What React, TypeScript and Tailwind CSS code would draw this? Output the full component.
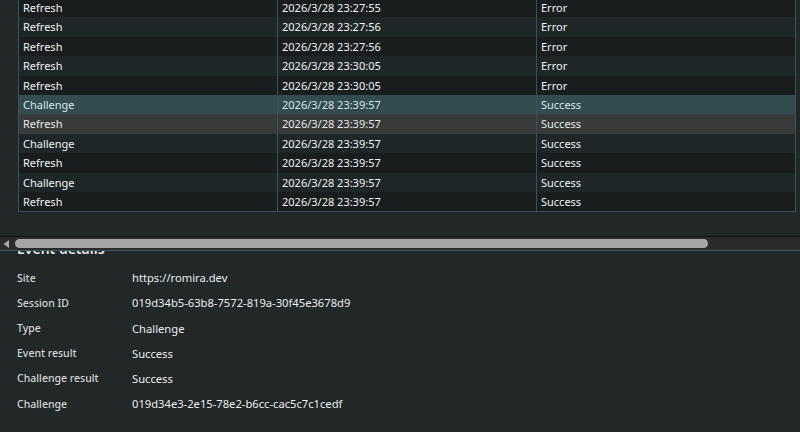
import React from "react";

type Row = { type: string; time: string; result: string };

const rows: Row[] = [
  { type: "Refresh", time: "2026/3/28 23:27:55", result: "Error" },
  { type: "Refresh", time: "2026/3/28 23:27:56", result: "Error" },
  { type: "Refresh", time: "2026/3/28 23:27:56", result: "Error" },
  { type: "Refresh", time: "2026/3/28 23:30:05", result: "Error" },
  { type: "Refresh", time: "2026/3/28 23:30:05", result: "Error" },
  { type: "Challenge", time: "2026/3/28 23:39:57", result: "Success" },
  { type: "Refresh", time: "2026/3/28 23:39:57", result: "Success" },
  { type: "Challenge", time: "2026/3/28 23:39:57", result: "Success" },
  { type: "Refresh", time: "2026/3/28 23:39:57", result: "Success" },
  { type: "Challenge", time: "2026/3/28 23:39:57", result: "Success" },
  { type: "Refresh", time: "2026/3/28 23:39:57", result: "Success" },
];

const details: [string, string][] = [
  ["Site", "https://romira.dev"],
  ["Session ID", "019d34b5-63b8-7572-819a-30f45e3678d9"],
  ["Type", "Challenge"],
  ["Event result", "Success"],
  ["Challenge result", "Success"],
  ["Challenge", "019d34e3-2e15-78e2-b6cc-cac5c7c1cedf"],
];

function rowClass(i: number) {
  if (i === 5) return "bg-[#344b50] text-[#d3e6ea]";
  if (i === 6) return "bg-[#393b3b] text-[#e4e8e8]";
  return i % 2 === 1 ? "bg-[#1f2628] text-[#f0f2f2]" : "bg-[#191d1e] text-[#f0f2f2]";
}

export default function App() {
  return (
    <div
      className="w-[800px] h-[432px] overflow-hidden bg-[#222727] flex flex-col"
      style={{ fontFamily: '"Noto Sans", "Open Sans", sans-serif' }}
    >
      <div className="h-[236px] overflow-hidden px-[18px] pr-[4px] shrink-0">
        <div className="mt-[-2px] border border-[#3d5158] border-t-0">
          {rows.map((r, i) => (
            <div key={i} className={`grid grid-cols-[259px_259px_1fr] h-[19.4px] text-[11px] leading-[19px] ${rowClass(i)}`}>
              <div className="pl-[4px] border-r border-[#3d5158]">{r.type}</div>
              <div className="pl-[4px] border-r border-[#3d5158]">{r.time}</div>
              <div className="pl-[4px]">{r.result}</div>
            </div>
          ))}
        </div>
      </div>
      <div className="h-[14px] shrink-0 bg-[#2b2b2b] border-t border-[#111414] flex items-center relative z-10">
        <svg width="14" height="12" viewBox="0 0 14 12" className="shrink-0">
          <path d="M9 2 L3.5 6 L9 10 Z" fill="#a8a8a8" />
        </svg>
        <div className="ml-[1px] w-[693px] h-[9px] rounded-full bg-[#a6a6a6]" />
      </div>
      <div className="h-px shrink-0 bg-[#3e5a62] relative z-10" />
      <div className="flex-1 overflow-hidden">
        <div className="mt-[-9px] pl-[17px] text-[14px] font-semibold text-[#e8e8e8] leading-[14px]">Event details</div>
        <div className="mt-[10px] flex flex-col">
          {details.map(([k, v]) => (
            <div key={k} className="h-[25.2px] flex items-center">
              <div className="w-[132px] shrink-0 pl-[17px] text-[10.5px] font-medium text-[#d4d6d6]">{k}</div>
              <div className="text-[11.2px] text-[#eceeee]">{v}</div>
            </div>
          ))}
        </div>
      </div>
    </div>
  );
}
